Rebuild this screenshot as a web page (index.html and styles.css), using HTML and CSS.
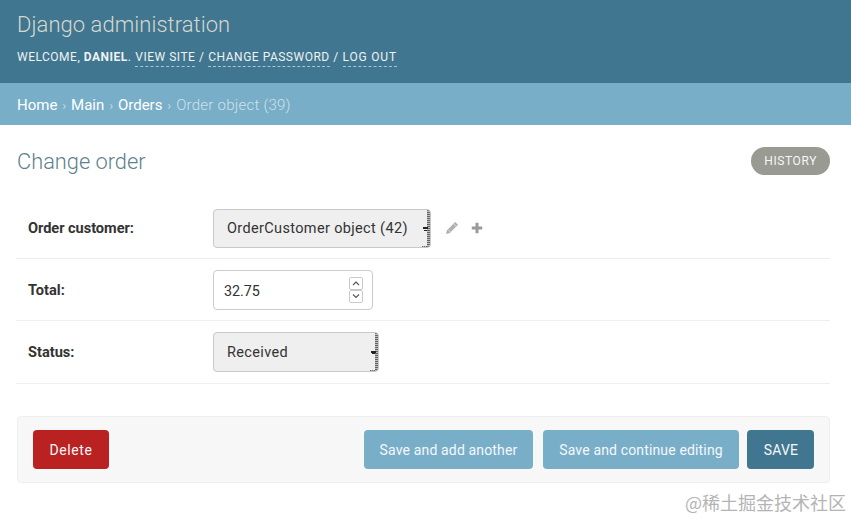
FILE: index.html
```html
<!DOCTYPE html>
<html lang="en">
<head>
<meta charset="utf-8">
<title>Change order | Django site admin</title>
<link rel="stylesheet" href="styles.css">
</head>
<body>
<header class="site-header">
  <h1 class="branding">Django administration</h1>
  <div class="user-tools">
    Welcome, <strong>Daniel</strong>.
    <a href="#">View site</a> /
    <a href="#">Change password</a> /
    <a class="logout" href="#">Log out</a>
  </div>
</header>
<nav class="breadcrumbs">
  <a href="#">Home</a><span class="sep">›</span><a href="#">Main</a><span class="sep">›</span><a href="#">Orders</a><span class="sep">›</span><span class="current">Order object (39)</span>
</nav>
<main class="content">
  <div class="title-row">
    <h2 class="page-title">Change order</h2>
    <a class="history" href="#">History</a>
  </div>
  <form class="order-form">
    <div class="form-row form-row-first">
      <label class="field-label strong-tight" for="customer">Order customer:</label>
      <select class="select select-customer" id="customer"><option>OrderCustomer object (42)</option></select>
      <a class="row-icon pencil" href="#" aria-label="Change">
        <svg width="14" height="14" viewBox="0 0 14 14"><path d="M10.200 1 13 3.800 4.800 12 1 13 2 9.200Z" fill="#b0b1ac"/><path d="M3.200 8.700 5.500 11M8.800 3 11.100 5.300" stroke="#e8e8e4" stroke-width=".8"/></svg>
      </a>
      <a class="row-icon plus" href="#" aria-label="Add">
        <svg width="12" height="12" viewBox="0 0 12 12"><path d="M4.500 .8h3v3.700h3.700v3H7.500v3.700h-3V7.500H.8v-3h3.700z" fill="#9a9b96"/></svg>
      </a>
    </div>
    <div class="form-row">
      <label class="field-label" for="total">Total:</label>
      <div class="number-wrap">
        <input class="number" id="total" type="text" value="32.75">
        <span class="spinner" aria-hidden="true">
          <svg width="14" height="26" viewBox="0 0 14 26">
            <rect x=".5" y=".5" width="13" height="12" rx="1.500" fill="#fff" stroke="#c9c9c9"/>
            <rect x=".5" y="13.500" width="13" height="12" rx="1.500" fill="#fff" stroke="#c9c9c9"/>
            <path d="M4 8 7 5 10 8M4 17.500 7 20.500 10 17.500" fill="none" stroke="#555" stroke-width="1.100"/>
          </svg>
        </span>
      </div>
    </div>
    <div class="form-row form-row-last">
      <label class="field-label" for="status">Status:</label>
      <select class="select select-status" id="status"><option>Received</option></select>
    </div>
    <div class="submit-row">
      <a class="btn btn-delete" href="#">Delete</a>
      <div class="submit-group">
        <a class="btn btn-light btn-add" href="#">Save and add another</a>
        <a class="btn btn-light btn-continue" href="#">Save and continue editing</a>
        <a class="btn btn-save" href="#">SAVE</a>
      </div>
    </div>
  </form>
</main>
<div class="watermark">@稀土掘金技术社区</div>
</body>
</html>
```
FILE: styles.css
```css
* { box-sizing: border-box; }
html, body { height: 100%; }
body {
  margin: 0;
  overflow: hidden;
  position: relative;
  background: #fff;
  color: #333;
  font-family: Roboto, "Liberation Sans", sans-serif;
  font-size: 14px;
}
a { text-decoration: none; color: inherit; }

.site-header {
  height: 83px;
  padding: 10px 17px 0;
  background: #417690;
  color: #f2f2ee;
}
.branding {
  margin: 0;
  font-size: 22px;
  line-height: 29px;
  font-weight: 300;
  letter-spacing: 0.05px;
  color: #d5d8cf;
}
.user-tools {
  margin-top: 10px;
  font-size: 12px;
  line-height: 16px;
  letter-spacing: 0.5px;
  text-transform: uppercase;
  color: #eef2f2;
}
.user-tools strong { font-weight: 700; }
.user-tools a { border-bottom: 1px dashed #a9c5d4; padding-bottom: 2px; margin-left: 0.5px; }
.user-tools .logout { letter-spacing: 0.8px; }

.breadcrumbs {
  height: 42px;
  padding: 2px 17px 0;
  display: flex;
  align-items: center;
  background: #79aec8;
  color: #fff;
  font-size: 15px;
}
.breadcrumbs .sep { margin: 0 4.900px; color: #c5dbe6; font-size: 13px; }
.breadcrumbs .current { color: #cfe0e8; font-weight: 300; letter-spacing: 0.25px; }

.content { padding: 0 21px 0 17px; }
.title-row {
  height: 80px;
  display: flex;
  justify-content: space-between;
  align-items: flex-start;
}
.page-title {
  margin: 22px 0 0;
  font-size: 21.800px;
  line-height: 29px;
  font-weight: 300;
  color: #5f7f8c;
}
.history {
  margin-top: 22px;
  height: 28px;
  padding: 0 13px;
  display: flex;
  align-items: center;
  border-radius: 14px;
  background: #999a92;
  color: #f6f6f4;
  font-size: 12px;
  letter-spacing: 0.6px;
  text-transform: uppercase;
}

.order-form { margin: 0 0 0 -1px; }
.form-row {
  display: flex;
  align-items: center;
  height: 62px;
  padding-left: 12px;
  border-bottom: 1px solid #eeeeee;
}
.form-row-first { height: 54px; padding-bottom: 7px; }
.form-row-last { height: 63px; }
.field-label {
  width: 185px;
  font-weight: 700;
  font-size: 14.600px;
  color: #333;
}
.strong-tight { letter-spacing: -0.05px; }
.select {
  appearance: none;
  height: 39px;
  padding: 1px 0 0 13px;
  border: 1px solid #c9c9c9;
  border-radius: 4px;
  font: 14.500px Roboto, "Liberation Sans", sans-serif;
  letter-spacing: 0.35px;
  color: #333;
  background-color: #efefef;
  background-image:
    linear-gradient(#222, #222),
    linear-gradient(#222, #222),
    repeating-linear-gradient(#666 0 1px, #bbb 1px 2px),
    repeating-linear-gradient(90deg, #666 0 1px, #bbb 1px 2px);
  background-repeat: no-repeat;
  background-size: 5px 2px, 3px 1px, 3px 100%, 8px 1px;
  background-position: right 2px center, right 3px top 20px, right 0 top, right 0 bottom;
}
.select-customer { width: 218px; }
.select-status { width: 166px; height: 40px; }

.row-icon { display: flex; }
.pencil { margin-left: 14px; }
.plus { margin-left: 12px; }

.number-wrap { position: relative; width: 160px; height: 40px; }
.number {
  width: 100%;
  height: 100%;
  padding: 2px 10px 0;
  border: 1px solid #cccccc;
  border-radius: 4px;
  font: 14.300px Roboto, "Liberation Sans", sans-serif;
  color: #333;
  background: #fff;
}
.spinner { position: absolute; top: 7px; right: 10px; display: flex; }

.submit-row {
  margin-top: 32px;
  height: 67px;
  margin-left: 1px;
  padding: 0 15px;
  display: flex;
  justify-content: space-between;
  align-items: center;
  border: 1px solid #eeeeee;
  border-radius: 4px;
  background-color: #f8f8f8;
  background-image: conic-gradient(#f5f5f5 25%, #fafafa 0 50%, #f5f5f5 0 75%, #fafafa 0);
  background-size: 2px 2px;
}
.submit-group { display: flex; }
.btn {
  height: 39px;
  display: flex;
  align-items: center;
  justify-content: center;
  border-radius: 4px;
  color: #f4f8fa;
  font-size: 14px;
  letter-spacing: 0.15px;
}
.btn-delete { width: 76px; background: #ba2121; letter-spacing: 0.6px; }
.btn-light { background: #79aec8; }
.btn-add { width: 169px; margin-right: 10px; }
.btn-continue { width: 196px; margin-right: 8px; }
.btn-save { width: 67px; background: #417690; padding-left: 1px; }

.watermark {
  position: absolute;
  right: 5px;
  bottom: 6px;
  font-family: "Noto Sans CJK SC", sans-serif;
  font-size: 18px;
  line-height: 21px;
  color: #b4b4b4;
}
```
